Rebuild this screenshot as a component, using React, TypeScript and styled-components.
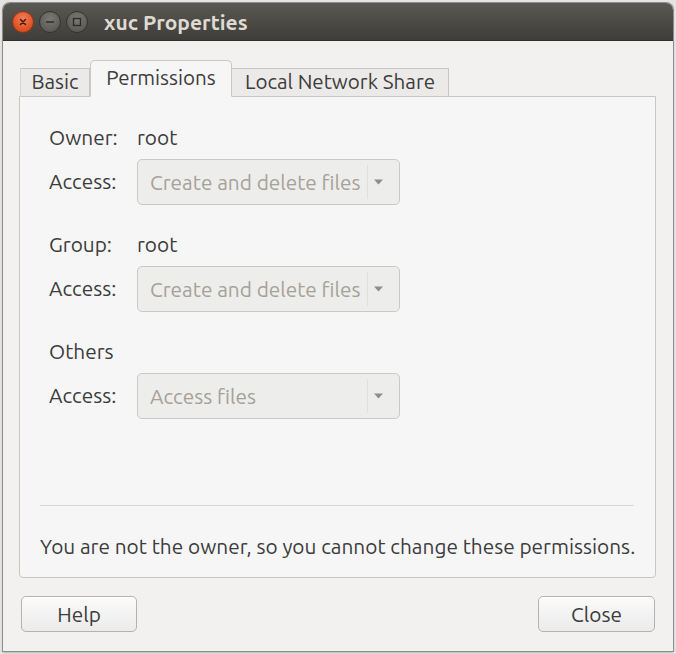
import React from "react";
import styled, { createGlobalStyle } from "styled-components";

const Global = createGlobalStyle`
  html, body { margin: 0; padding: 0; background: #e6e6e6; }
  body { font-family: "Ubuntu", "Noto Sans", "DejaVu Sans", sans-serif; }
  #root { width: 676px; height: 654px; }
`;

const Page = styled.div`
  width: 676px;
  height: 654px;
  padding: 3px;
  box-sizing: border-box;
  background: #e4e4e4;
`;

const Window = styled.div`
  width: 670px;
  height: 648px;
  display: flex;
  flex-direction: column;
  border-radius: 7px 7px 0 0;
  overflow: hidden;
  background: #f2f1f0;
  box-shadow: 0 0 0 1px #8e8d8b, 0 1px 2px rgba(0, 0, 0, 0.55);
`;

const TitleBar = styled.div`
  height: 38px;
  flex: 0 0 38px;
  display: flex;
  align-items: center;
  padding-left: 9px;
  gap: 5px;
  background: linear-gradient(#5a5853, #3e3d39);
  border-bottom: 1px solid #2f2e2b;
  box-sizing: border-box;
`;

const WinButton = styled.div<{ $kind: "close" | "other" }>`
  width: 22px;
  height: 22px;
  border-radius: 50%;
  box-sizing: border-box;
  display: flex;
  align-items: center;
  justify-content: center;
  border: 1px solid ${(p) => (p.$kind === "close" ? "#8f3516" : "#34332f")};
  background: ${(p) =>
    p.$kind === "close"
      ? "radial-gradient(circle at 50% 35%, #f2805a, #dc4d1f 70%)"
      : "radial-gradient(circle at 50% 35%, #7c7a74, #5d5c57 70%)"};
`;

const Title = styled.div`
  margin-left: 11px;
  font-weight: bold;
  font-size: 21px;
  color: #dfdbd2;
`;

const Body = styled.div`
  flex: 1;
  display: flex;
  flex-direction: column;
  padding: 19px 17px 18px 16px;
  box-sizing: border-box;
`;

const TabStrip = styled.div`
  display: flex;
  align-items: flex-end;
  height: 37px;
  padding-left: 1px;
  position: relative;
  z-index: 1;
`;

const Tab = styled.div<{ $active?: boolean; $w: number }>`
  width: ${(p) => p.$w}px;
  height: ${(p) => (p.$active ? 37 : 29)}px;
  box-sizing: border-box;
  display: flex;
  align-items: center;
  justify-content: center;
  font-size: 20.6px;
  color: #3c3c3c;
  padding-bottom: ${(p) => (p.$active ? 2 : 3)}px;
  background: ${(p) => (p.$active ? "#f6f6f6" : "#ebeae8")};
  border: 1px solid #c8c7c4;
  border-bottom: ${(p) => (p.$active ? "1px solid #f6f6f6" : "1px solid #c8c7c4")};
  border-left: ${(p) => (p.$active ? "1px solid #c8c7c4" : "none")};
  border-radius: ${(p) => (p.$active ? "5px 5px 0 0" : "0")};
  white-space: nowrap;
  &:first-child {
    border-left: 1px solid #d6d5d2;
  }
`;

const Panel = styled.div`
  height: 482px;
  margin-top: -1px;
  display: flex;
  flex-direction: column;
  background: #f6f6f6;
  border: 1px solid #c8c7c4;
  border-radius: 0 0 4px 4px;
  box-sizing: border-box;
  padding: 30px 21px 19px 20px;
`;

const Section = styled.div`
  display: grid;
  grid-template-columns: 88px 263px;
  grid-template-rows: 22px 46px;
  row-gap: 10px;
  padding-left: 9px;
  margin-bottom: 29px;
`;

const Label = styled.div`
  font-size: 20.8px;
  line-height: 22px;
  color: #3c3c3c;
  display: flex;
  align-items: center;
  white-space: nowrap;
`;

const Value = styled(Label)`
  grid-column: 2;
`;

const Combo = styled.div`
  height: 46px;
  box-sizing: border-box;
  display: flex;
  align-items: center;
  border: 1px solid #c9c9c7;
  border-radius: 5px;
  background: #ededec;
`;

const ComboText = styled.div`
  flex: 1;
  padding-left: 12px;
  font-size: 20.8px;
  color: #a6a198;
  white-space: nowrap;
`;

const ComboArrow = styled.div`
  width: 32px;
  height: 34px;
  box-sizing: border-box;
  border-left: 1px solid #e0dfdd;
  display: flex;
  align-items: center;
  padding-left: 6px;
`;

const Spacer = styled.div`
  flex: 1;
`;

const Separator = styled.div`
  height: 1px;
  background: #d8d7d5;
  margin-bottom: 30px;
`;

const Message = styled.div`
  font-size: 20.8px;
  line-height: 22px;
  color: #3c3c3c;
  white-space: nowrap;
`;

const Footer = styled.div`
  display: flex;
  justify-content: space-between;
  margin-top: 18px;
  padding: 0 1px 0 2px;
`;

const Button = styled.div<{ $w: number }>`
  width: ${(p) => p.$w}px;
  height: 36px;
  box-sizing: border-box;
  display: flex;
  align-items: center;
  justify-content: center;
  border: 1px solid #b3b2af;
  border-radius: 5px;
  background: linear-gradient(#fbfbfb, #ebebea);
  box-shadow: inset 0 1px 0 #ffffff;
  font-size: 20.8px;
  color: #3c3c3c;
`;

const Arrow = () => (
  <svg width="9" height="6" viewBox="0 0 9 6">
    <path d="M0 0.5 L9 0.5 L4.5 5.5 Z" fill="#8f8e8b" />
  </svg>
);

const AccessRow = ({ heading, owner, value }: { heading: string; owner?: string; value: string }) => (
  <Section>
    <Label>{heading}</Label>
    {owner ? <Value>{owner}</Value> : <div />}
    <Label>Access:</Label>
    <Combo>
      <ComboText>{value}</ComboText>
      <ComboArrow>
        <Arrow />
      </ComboArrow>
    </Combo>
  </Section>
);

export default function App() {
  return (
    <>
      <Global />
      <Page>
        <Window>
          <TitleBar>
            <WinButton $kind="close">
              <svg width="10" height="10" viewBox="0 0 10 10">
                <path d="M2.5 2.5 L7.5 7.5 M7.5 2.5 L2.5 7.5" stroke="#4a1a0a" strokeWidth="1.6" strokeLinecap="round" />
              </svg>
            </WinButton>
            <WinButton $kind="other">
              <svg width="10" height="10" viewBox="0 0 10 10">
                <path d="M1 5 L9 5" stroke="#2e2d2a" strokeWidth="1.6" />
              </svg>
            </WinButton>
            <WinButton $kind="other">
              <svg width="10" height="10" viewBox="0 0 10 10">
                <rect x="1.5" y="1.5" width="7" height="7" fill="none" stroke="#2e2d2a" strokeWidth="1.4" />
              </svg>
            </WinButton>
            <Title>xuc Properties</Title>
          </TitleBar>
          <Body>
            <TabStrip>
              <Tab $w={70}>Basic</Tab>
              <Tab $w={142} $active>
                Permissions
              </Tab>
              <Tab $w={217}>Local Network Share</Tab>
            </TabStrip>
            <Panel>
              <AccessRow heading="Owner:" owner="root" value="Create and delete files" />
              <AccessRow heading="Group:" owner="root" value="Create and delete files" />
              <AccessRow heading="Others" value="Access files" />
              <Spacer />
              <Separator />
              <Message>You are not the owner, so you cannot change these permissions.</Message>
            </Panel>
            <Footer>
              <Button $w={116}>Help</Button>
              <Button $w={117}>Close</Button>
            </Footer>
          </Body>
        </Window>
      </Page>
    </>
  );
}
